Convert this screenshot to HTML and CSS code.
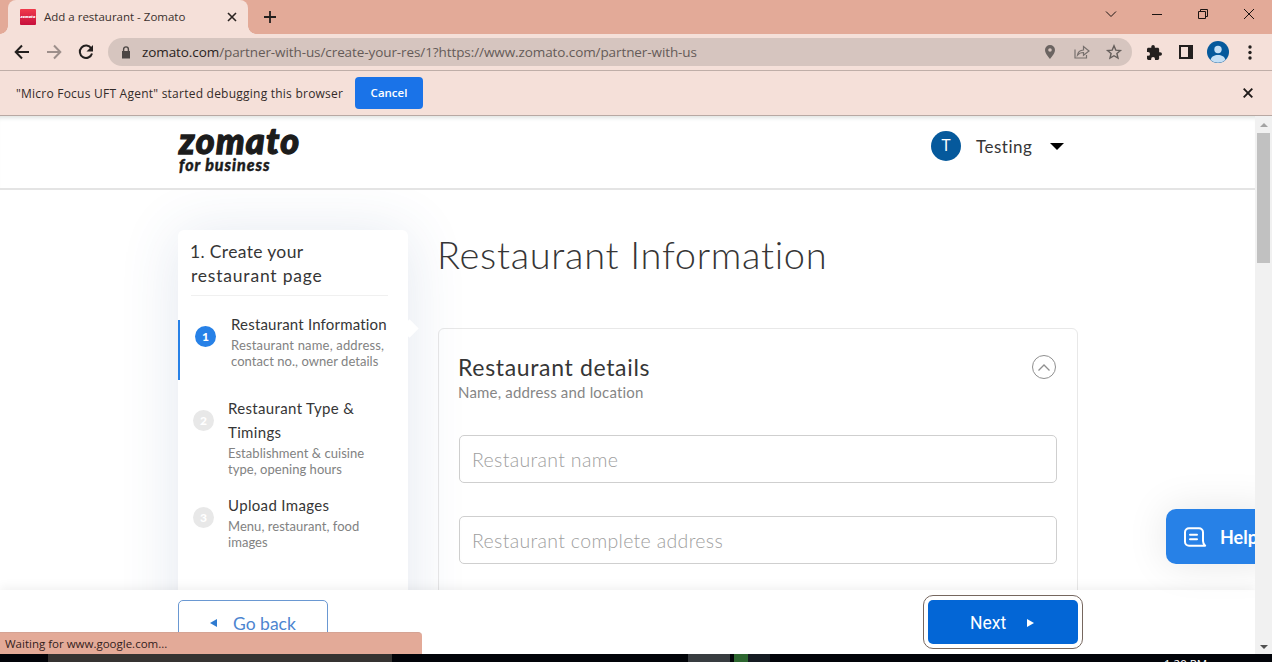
FILE: index.html
```html
<!DOCTYPE html>
<html lang="en">
<head>
<meta charset="utf-8">
<title>Add a restaurant - Zomato</title>
<link rel="stylesheet" href="styles.css">
</head>
<body>
<div class="tabstrip">
  <div class="tab">
    <span class="favicon">zomato</span>
    <span class="tab-title">Add a restaurant - Zomato</span>
    <svg class="tab-close" width="10" height="10" viewBox="0 0 10 10"><path d="M1 1l8 8M9 1l-8 8"/></svg>
  </div>
  <svg class="new-tab" width="12" height="12" viewBox="0 0 12 12"><path d="M6 0v12M0 6h12"/></svg>
  <div class="window-controls">
    <svg width="12" height="12" viewBox="0 0 12 12"><path d="M1 3.500l5 5 5-5"/></svg>
    <svg width="12" height="12" viewBox="0 0 12 12"><path d="M1 6.500h10"/></svg>
    <svg width="12" height="12" viewBox="0 0 12 12"><path d="M1.500 3.500h7v7h-7zM3.500 3.500v-2h7v7h-2"/></svg>
    <svg width="12" height="12" viewBox="0 0 12 12"><path d="M1 1l10 10M11 1L1 11"/></svg>
  </div>
</div>
<div class="toolbar">
  <svg class="nav" width="16" height="16" viewBox="0 0 16 16"><path d="M15 8H2M8 1.500L1.700 8 8 14.500"/></svg>
  <svg class="nav nav-off" width="16" height="16" viewBox="0 0 16 16"><path d="M1 8h13M8 1.500L14.300 8 8 14.500"/></svg>
  <svg class="nav" width="16" height="16" viewBox="0 0 16 16"><path d="M13.300 4.500A6.200 6.200 0 1 0 14 9.500"/><path class="solid" d="M15 1v6.500H8.500z"/></svg>
  <div class="omnibox">
    <svg class="lock" width="10" height="13" viewBox="0 0 10 13"><path d="M1 5h8v7.500H1z" fill="#4c4644"/><path d="M2.600 5V3.300a2.400 2.400 0 0 1 4.800 0V5" fill="none" stroke="#4c4644" stroke-width="1.400"/></svg>
    <span class="url"><b>zomato.com</b>/partner-with-us/create-your-res/1?https://www.zomato.com/partner-with-us</span>
    <svg class="pin" width="10" height="14" viewBox="0 0 10 14"><path fill-rule="evenodd" d="M5 0a5 5 0 0 0-5 5c0 3.500 5 9 5 9s5-5.500 5-9a5 5 0 0 0-5-5zm0 3.200a1.800 1.800 0 1 1 0 3.600 1.800 1.800 0 0 1 0-3.600z" fill="#6b6461"/></svg>
    <svg class="share" width="16" height="14" viewBox="0 0 16 14"><path d="M1 4.500v8.500h11.500v-3M3.500 10.200c.5-3.400 2.400-5 6-5.200V1.500L15 6l-5.500 4.300V7.500c-2.800 0-4.400.7-6 2.700z"/></svg>
    <svg class="star" width="14" height="14" viewBox="0 0 14 14"><path d="M7 .8l1.800 4.300 4.600.4-3.500 3 1.100 4.600L7 10.700l-4 2.400 1.100-4.600-3.500-3 4.600-.4z"/></svg>
  </div>
  <svg class="puzzle" width="15" height="15" viewBox="2 1 21 21"><path d="M20.500 11H19V7c0-1.100-.9-2-2-2h-4V3.500a2.500 2.500 0 0 0-5 0V5H4c-1.100 0-2 .9-2 2v3.800h1.500a2.700 2.700 0 0 1 0 5.400H2V20c0 1.100.9 2 2 2h3.800v-1.500a2.700 2.700 0 0 1 5.400 0V22H17c1.100 0 2-.9 2-2v-4h1.500a2.500 2.500 0 0 0 0-5z" fill="#231f1e"/></svg>
  <svg class="panel" width="14" height="14" viewBox="0 0 14 14"><path d="M1 1h12v12H1z" fill="none" stroke="#231f1e" stroke-width="2"/><path d="M9 1h4v12H9z" fill="#231f1e"/></svg>
  <svg class="avatar" width="22" height="22" viewBox="0 0 22 22"><circle cx="11" cy="11" r="11" fill="#05599c"/><circle cx="11" cy="8.500" r="3.700" fill="#c4dff5"/><path d="M3.600 19c.6-3.600 3.800-5 7.400-5s6.800 1.400 7.400 5a11 11 0 0 1-14.800 0z" fill="#c4dff5"/></svg>
  <svg class="more" width="4" height="14" viewBox="0 0 4 14"><circle cx="2" cy="2" r="1.700"/><circle cx="2" cy="7.500" r="1.700"/><circle cx="2" cy="13" r="1.700"/></svg>
</div>
<div class="infobar">
  <span class="info-text">"Micro Focus UFT Agent" started debugging this browser</span>
  <button class="cancel">Cancel</button>
  <svg class="info-close" width="10" height="10" viewBox="0 0 10 10"><path d="M.7.7l8.600 8.600M9.300.7L.7 9.300"/></svg>
</div>
<div class="page">
  <div class="viewport">
    <header class="site-header">
      <div class="brand">
        <div class="brand-name">zomato</div>
        <div class="brand-sub">for business</div>
      </div>
      <div class="account">
        <span class="initial">T</span>
        <span class="account-name">Testing</span>
        <span class="caret"></span>
      </div>
    </header>
    <main class="main">
      <aside class="steps">
        <h3 class="steps-title"><span class="steps-title-lead">1. Create your</span><br>restaurant page</h3>
        <div class="step step-active">
          <span class="num">1</span>
          <div>
            <div class="step-name">Restaurant Information</div>
            <div class="step-sub">Restaurant name, address,<br><span class="step-sub-tight">contact no., owner details</span></div>
          </div>
        </div>
        <div class="step">
          <span class="num">2</span>
          <div>
            <div class="step-name step-name-wide">Restaurant Type &amp;<br>Timings</div>
            <div class="step-sub step-sub-tight">Establishment &amp; cuisine<br>type, opening hours</div>
          </div>
        </div>
        <div class="step">
          <span class="num">3</span>
          <div>
            <div class="step-name step-name-wide">Upload Images</div>
            <div class="step-sub step-sub-tight">Menu, restaurant, food<br>images</div>
          </div>
        </div>
      </aside>
      <section class="content">
        <h1 class="heading">Restaurant Information</h1>
        <div class="card">
          <div class="card-head">
            <div>
              <h2 class="card-title">Restaurant details</h2>
              <p class="card-sub">Name, address and location</p>
            </div>
            <svg class="collapse" width="24" height="24" viewBox="0 0 24 24"><circle cx="12" cy="12" r="11.500"/><path class="chevron" d="M6.500 15.500l5.500-5.500 5.500 5.500"/></svg>
          </div>
          <div class="field">Restaurant name</div>
          <div class="field">Restaurant complete address</div>
        </div>
      </section>
    </main>
    <footer class="actions">
      <button class="back"><i class="tri-left"></i>Go back</button>
      <button class="next"><span>Next</span><i class="tri-right"></i></button>
    </footer>
    <div class="help">
      <svg width="22" height="20" viewBox="0 0 22 20"><path d="M5 1.200h10a4 4 0 0 1 4 4V14c0 2 .8 3.600 2.200 4.700H5a4 4 0 0 1-4-4V5.200a4 4 0 0 1 4-4zM6 7.700h7M6 12.300h7"/></svg>
      <span>Help</span>
    </div>
    <div class="status">Waiting for www.google.com...</div>
  </div>
  <div class="scrollbar"><i class="sb-up"></i><i class="sb-thumb"></i><i class="sb-down"></i></div>
</div>
<div class="taskbar"><i class="task task-a"></i><i class="task task-b"></i><i class="task task-c"></i><i class="task task-d"></i><span class="clock">1:20 PM</span></div>
</body>
</html>
```
FILE: styles.css
```css
* { box-sizing: border-box; }
body {
  margin: 0; width: 1272px; height: 662px; overflow: hidden;
  display: flex; flex-direction: column; background: #fff;
  font-family: Lato, "Open Sans", sans-serif; color: #363636;
}
svg { display: block; flex: none; overflow: visible; }
h1, h2, h3, p { margin: 0; font-weight: 400; }
button { font-family: inherit; margin: 0; padding: 0; }
span, h1, h2, h3, p, .step-name, .step-sub { white-space: nowrap; }

/* Browser chrome */
.tabstrip { height: 34px; flex: none; background: #e3aa98; display: flex; align-items: center; padding-left: 8px; font-family: "Open Sans", sans-serif; }
.tab { width: 240px; height: 34px; background: #f5e0d9; border-radius: 8px 8px 0 0; display: flex; align-items: center; padding: 0 11px 0 12px; position: relative; }
.tab::before, .tab::after { content: ""; position: absolute; bottom: 0; width: 8px; height: 8px; }
.tab::before { left: -8px; background: radial-gradient(circle at 0 0, #e3aa98 7.500px, #f5e0d9 8px); }
.tab::after { right: -8px; background: radial-gradient(circle at 100% 0, #e3aa98 7.500px, #f5e0d9 8px); }
.favicon { width: 16px; height: 16px; border-radius: 1px; background: linear-gradient(#f03a4b, #c70f3d); color: #fff; font-size: 4px; font-weight: 800; font-style: italic; line-height: 15px; text-align: center; }
.tab-title { margin-left: 8px; font-size: 11.500px; color: #3a302d; flex: 1; line-height: 18px; }
.tab-close { fill: none; stroke: #2a2321; stroke-width: 1.600; }
.new-tab { margin-left: 16px; fill: none; stroke: #231f1e; stroke-width: 1.800; }
.window-controls { margin-left: auto; display: flex; gap: 34px; padding-right: 17px; margin-top: -6px; }
.window-controls svg { fill: none; stroke: #1c1412; stroke-width: 1; }

.toolbar { height: 37px; flex: none; background: #f5e0d9; border-bottom: 1px solid #bfaea8; display: flex; align-items: center; padding-left: 14px; }
.nav { margin-right: 16px; fill: none; stroke: #231f1e; stroke-width: 2; }
.nav-off { stroke: #9d8f8b; }
.nav .solid { fill: #231f1e; stroke: none; }
.omnibox { width: 1024px; height: 28px; margin-left: -2px; background: #d6c5bf; border-radius: 14px; display: flex; align-items: center; padding: 0 11px 0 13px; }
.url { margin-left: 11px; flex: 1; font: 13.500px/20px "Open Sans", sans-serif; letter-spacing: -.09px; color: #655b58; }
.url b { font-weight: 400; color: #2a2321; }
.share { margin: 0 17px 0 19px; fill: none; stroke: #77706d; stroke-width: 1.200; }
.star { fill: none; stroke: #655e5b; stroke-width: 1.400; }
.puzzle { margin-left: 15px; }
.panel { margin-left: 17px; }
.avatar { margin-left: 14px; }
.more { margin-left: 19px; fill: #231f1e; }

.infobar { height: 45px; flex: none; background: #f5e0d9; border-bottom: 1px solid #b8a8a3; display: flex; align-items: center; padding: 0 19px 0 16px; }
.info-text { width: 339px; padding-top: 1px; font: 12px/18px "Open Sans", sans-serif; letter-spacing: .235px; color: #332b29; }
.cancel { width: 68px; height: 32px; border: 0; border-radius: 4px; background: #1a73e8; color: #fff; font: 600 11.500px/16px "Open Sans", sans-serif; }
.info-close { margin-left: auto; fill: none; stroke: #1f1a19; stroke-width: 1.900; }

/* Site header */
.page { height: 538px; flex: none; display: flex; }
.viewport { width: 1255px; position: relative; overflow: hidden; display: flex; flex-direction: column; }
.site-header { height: 74px; flex: none; border-bottom: 2px solid #e4e4e4; padding: 0 191px 0 179px; display: flex; justify-content: space-between; box-shadow: inset 0 5px 4px -3px #dfe3e1; position: relative; background: #fff; z-index: 1; }
.brand { padding-top: 7px; color: #1c1c1c; font-weight: 900; font-style: italic; }
.brand-name { font-size: 36px; line-height: 34px; letter-spacing: 1.300px; -webkit-text-stroke: 1.300px #1c1c1c; }
.brand-sub { font-size: 16px; line-height: 16px; letter-spacing: .95px; -webkit-text-stroke: .4px #1c1c1c; }
.account { display: flex; align-items: center; height: 60px; }
.initial { width: 30px; height: 30px; border-radius: 50%; background: #05599c; color: #fff; font: 16px/30px Roboto, sans-serif; text-align: center; }
.account-name { margin-left: 15px; width: 74px; padding-top: 2px; font-size: 17px; line-height: 24px; letter-spacing: .5px; }
.caret { border: 7px solid transparent; border-top-color: #000; border-bottom: 0; }

/* Step list */
.main { height: 400px; flex: none; padding: 40px 0 0 178px; display: flex; gap: 30px; overflow: hidden; }
.steps { width: 230px; height: 440px; flex: none; border-radius: 6px; background: #fff; box-shadow: 0 4px 60px rgba(50, 85, 140, .14); padding-top: 10px; position: relative; }
.steps::after { content: ""; position: absolute; left: 225px; top: 92px; width: 13px; height: 13px; transform: rotate(45deg); background: #fff; }
.steps-title { margin: 0 20px 16px 13px; padding-bottom: 7px; border-bottom: 1px solid #f0f0f0; font-size: 17.500px; line-height: 24px; letter-spacing: .8px; text-indent: -1px; }
.steps-title-lead { letter-spacing: .35px; }
.step { display: flex; padding-left: 15px; margin-bottom: 16px; position: relative; }
.step-active { padding-left: 17px; margin-bottom: 27px; }
.step-active::before { content: ""; position: absolute; left: 0; top: 8px; width: 2px; height: 60px; background: #2781e7; }
.num { width: 21px; height: 21px; margin: 14px 14px 0 0; border-radius: 50%; background: #e8e8e8; color: #fff; font-size: 12px; font-weight: 900; line-height: 21px; text-align: center; }
.step-active .num { background: #2781e7; margin-right: 15px; }
.step-name { font-size: 15px; line-height: 24px; letter-spacing: .19px; margin-bottom: 1px; }
.step-name-wide { letter-spacing: .34px; }
.step-sub { font-size: 13px; line-height: 16px; letter-spacing: .17px; color: #828282; }
.step-sub-tight { letter-spacing: .04px; }

/* Form */
.content { width: 640px; flex: none; }
.heading { font-size: 38px; line-height: 40px; letter-spacing: .7px; font-weight: 300; margin: 4px 0 54px -1px; height: 40px; }
.card { border: 1px solid #e8e8e8; border-radius: 6px; height: 400px; padding: 25px 20px; }
.card-head { display: flex; justify-content: space-between; height: 81px; }
.card-title { font-size: 23px; line-height: 26px; letter-spacing: .66px; text-indent: -1px; }
.card-sub { font-size: 15px; line-height: 20px; letter-spacing: .18px; margin-top: 2px; text-indent: -1px; color: #868686; }
.collapse { fill: none; stroke: #8f8f8f; stroke-width: 1; margin: 1px 1px 0 0; }
.chevron { stroke-width: 1.300; }
.field { height: 48px; border: 1px solid #cfcfcf; border-radius: 5px; margin-bottom: 33px; padding-left: 12px; font-size: 19.500px; font-weight: 300; line-height: 47px; letter-spacing: .33px; color: #a0a0a0; }

.actions { height: 64px; flex: none; background: #fff; box-shadow: 0 -3px 10px rgba(0, 0, 0, .06); padding: 10px 177px 0 178px; display: flex; justify-content: space-between; position: relative; }
.back, .next { width: 150px; height: 44px; border-radius: 5px; display: flex; align-items: center; }
.back { border: 1px solid #6a98d2; background: #fff; color: #4d85d0; font-size: 17.500px; padding: 2px 0 0 31px; gap: 16px; }
.next { border: 0; background: #0366d6; color: #fff; font: 17.500px/24px Roboto, sans-serif; padding: 2px 0 0 42px; gap: 21px; outline: 1px solid #76675f; outline-offset: 4px; }
.tri-left { border: 4px solid transparent; border-right: 7px solid #2f7bd0; border-left: 0; }
.tri-right { border: 4px solid transparent; border-left: 7px solid #fff; border-right: 0; }
.help { position: absolute; left: 1166px; top: 393px; width: 110px; height: 55px; border-radius: 10px; background: #2781e7; color: #fff; display: flex; align-items: center; padding-left: 18px; gap: 14px; font-size: 18px; font-weight: 700; box-shadow: 0 0 40px rgba(0, 0, 0, .1); }
.help svg { fill: none; stroke: #fff; stroke-width: 2; stroke-linejoin: round; stroke-linecap: round; }
.status { position: absolute; left: 0; bottom: 0; width: 422px; height: 22px; border-radius: 0 4px 0 0; background: #e3aa98; color: #33211c; padding-left: 5px; font: 11.500px/22px "Open Sans", sans-serif; border-top: 1px solid #d5a394; }

.scrollbar { width: 17px; background: #f1f1f1; display: flex; flex-direction: column; align-items: center; padding: 7px 0 5px; }
.sb-up { border: 4px solid transparent; border-bottom-color: #a3a3a3; border-top: 0; margin-bottom: 6px; }
.sb-thumb { width: 13px; height: 130px; background: #c1c1c1; }
.sb-down { border: 4px solid transparent; border-top-color: #505050; border-bottom: 0; margin-top: auto; }

/* Desktop taskbar */
.taskbar { height: 8px; flex: none; background: #020409; display: flex; overflow: hidden; }
.task-a { width: 344px; margin-left: 48px; background: #353331; }
.task-b { width: 42px; margin-left: 296px; background: #383c40; }
.task-c { width: 14px; margin-left: 4px; background: #2d6630; }
.task-d { width: 22px; background: #151b22; }
.clock { margin: 2px 0 0 394px; color: #fff; font: 11.500px/16px "Open Sans", sans-serif; }
```
